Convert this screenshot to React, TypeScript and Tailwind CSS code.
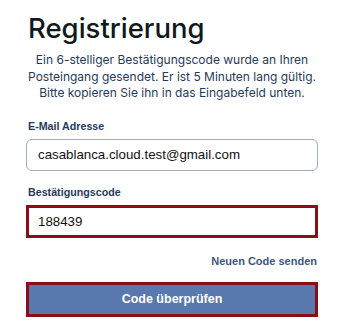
import React, { useState } from 'react';

export default function App() {
  const [email, setEmail] = useState('casablanca.cloud.test@gmail.com');
  const [code, setCode] = useState('188439');

  return (
    <div className="w-[350px] h-[326px] bg-white overflow-hidden">
      <div className="w-[292px] ml-[26px] pt-[11px]">
        <h1 className="font-['Inter',sans-serif] text-[27.5px] leading-[34px] font-medium text-[#111820] pl-[2px]">
          Registrierung
        </h1>
        <p className="mt-[7px] -mx-[10px] text-center whitespace-nowrap font-['Inter',sans-serif] text-[12px] leading-[16.5px] text-[#1f3a5c]">
          Ein 6-stelliger Bestätigungscode wurde an Ihren
          <br />
          Posteingang gesendet. Er ist 5 Minuten lang gültig.
          <br />
          Bitte kopieren Sie ihn in das Eingabefeld unten.
        </p>

        <label className="block mt-[15px] pl-[2px] font-['Liberation_Sans',sans-serif] text-[10.7px] leading-[18px] font-bold text-[#1f3a5c]">
          E-Mail Adresse
        </label>
        <input
          type="text"
          value={email}
          onChange={e => setEmail(e.target.value)}
          className="block mt-[4px] w-full h-[32px] px-[11px] rounded-[6px] border border-[#a3adb8] font-['Liberation_Sans',sans-serif] text-[13.3px] text-[#111] outline-none"
        />

        <label className="block mt-[12px] pl-[2px] font-['Liberation_Sans',sans-serif] text-[10.7px] leading-[18px] font-bold text-[#1f3a5c]">
          Bestätigungscode
        </label>
        <input
          type="text"
          value={code}
          onChange={e => setCode(e.target.value)}
          className="block mt-[4px] w-full h-[33px] px-[9px] border-[3px] border-[#8c0d16] font-['Liberation_Sans',sans-serif] text-[13.3px] text-[#111] outline-none"
        />

        <div className="flex justify-end mt-[14px]">
          <button className="font-['Liberation_Sans',sans-serif] text-[11px] leading-[18px] font-bold text-[#3d5780] pr-[1px]">
            Neuen Code senden
          </button>
        </div>

        <button className="block mt-[12px] w-full h-[35px] bg-[#5878ae] border-[3px] border-[#8c0d16] font-['Liberation_Sans',sans-serif] text-[12.5px] font-bold text-white">
          Code überprüfen
        </button>
      </div>
    </div>
  );
}
